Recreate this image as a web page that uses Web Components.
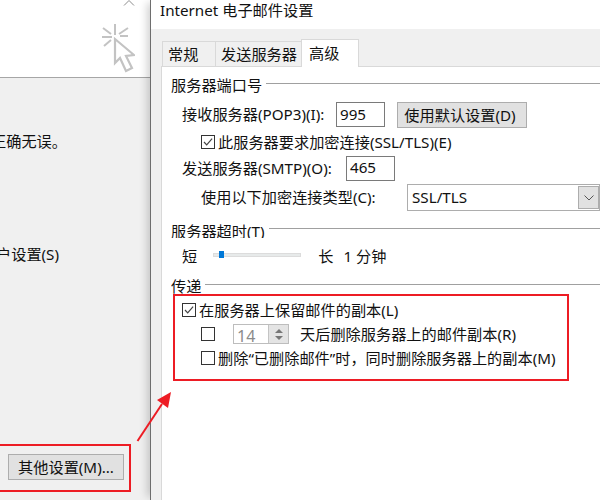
<!DOCTYPE html>
<html lang="zh-CN"><head><meta charset="utf-8">
<style>
html,body{margin:0;padding:0;width:600px;height:500px;overflow:hidden;background:#fff}
body{font-family:"Noto Sans","Noto Sans CJK SC",sans-serif;font-size:15.2px;color:#111}
</style></head><body>
<x-desktop>
  <x-back-window slot="left"></x-back-window>
  <x-mail-dialog slot="right"></x-mail-dialog>
</x-desktop>
<script>
function def(name, css, html){
  customElements.define(name, class extends HTMLElement{
    constructor(){super();const r=this.attachShadow({mode:'open'});
      r.innerHTML='<style>'+css+'</style>'+(typeof html==='function'?html(this):html);}
  });
}
def('x-button',`:host{display:inline-flex;align-items:center;justify-content:center;box-sizing:border-box;background:#e1e1e1;border:1px solid #adadad;white-space:nowrap;padding-bottom:2px}`,`<slot></slot>`);
def('x-check',`:host{display:flex;align-items:center;gap:3px;white-space:nowrap}
 .b{width:14px;height:14px;box-sizing:border-box;border:1px solid #333;background:#fff;display:block;flex:none}
 .s{padding-bottom:2px}
 svg{display:block}`,el=>`<span class="b">${el.hasAttribute('checked')?'<svg width="12" height="12" viewBox="0 0 12 12"><path d="M2 6 4.7 8.9 10.1 2.7" fill="none" stroke="#444" stroke-width="1.2"/></svg>':''}</span><span class="s"><slot></slot></span>`);
def('x-input',`:host{display:flex;align-items:center;box-sizing:border-box;background:#fff;border:1px solid #7a7a7a;padding:0 0 2px 3px;height:25px}`,`<slot></slot>`);
def('x-group',`:host{display:block}
 .l{display:flex;align-items:center;gap:4px;white-space:nowrap;overflow:hidden;height:var(--lh,20px)}
 .t{flex:none;padding-bottom:var(--lp,2px)}
 i{flex:1;height:1px;background:#a0a0a0;margin-bottom:4px}`,el=>`<div class="l"><span class="t">${el.getAttribute('label')}</span><i></i></div><slot></slot>`);
def('x-spinner',`:host{display:flex;box-sizing:border-box;width:56px;height:20px;border:1px solid #bdbdbd;background:#fff;color:#8a8a8a}
 span{flex:1;padding:1px 0 0 3px;line-height:20px;font-size:16px}
 b{width:20px;background:#e4e4e4;border-left:1px solid #c4c4c4;display:flex;flex-direction:column;align-items:center;justify-content:space-around;padding:2px 0;box-sizing:border-box}
 svg{display:block}`,`<span><slot></slot></span><b><svg width="8" height="4"><path d="M4 0 8 4H0z" fill="#777"/></svg><svg width="8" height="4"><path d="M0 0H8L4 4z" fill="#777"/></svg></b>`);
def('x-select',`:host{display:flex;box-sizing:border-box;height:27px;border:1px solid #adadad;background:#fff;align-items:center;padding:0 0 0 3px}
 span{flex:1;padding:0 0 2px 1px}
 b{width:21px;height:23px;box-sizing:border-box;background:#e1e1e1;border:1px solid #adadad;display:flex;align-items:center;justify-content:center}`,`<span><slot></slot></span><b><svg width="10" height="6"><path d="M.5 .5 5 5 9.5 .5" fill="none" stroke="#555"/></svg></b>`);
def('x-slider',`:host{display:block;position:relative;width:88px;height:16px}
 .track{position:absolute;left:0;right:0;top:5px;height:4px;background:#e7eaea;border:1px solid #dcdcdc;box-sizing:border-box}
 .thumb{position:absolute;left:6px;top:3px;width:5px;height:7px;background:#0078d7}`,`<div class="track"></div><div class="thumb"></div>`);
def('x-tab',`:host{display:flex;align-items:center;justify-content:flex-start;box-sizing:border-box;height:25px;background:#f0f0f0;border:1px solid #d9d9d9;border-bottom:0;margin-right:-1px;white-space:nowrap;padding:0 0 2px var(--tp,5px)}
 :host([active]){height:28px;background:#fff;position:relative;z-index:1;margin-bottom:-1px;padding-bottom:4px}`,`<slot></slot>`);
def('x-row',`:host{display:flex;align-items:center;white-space:nowrap}`,`<slot></slot>`);

def('x-back-window',`:host{display:flex;flex-direction:column;height:100%;background:#f0f0f0;overflow:hidden}
 .top{height:77px;box-sizing:content-box;background:#fff;border-bottom:1px solid #a6a6a6;display:flex;flex-direction:column;align-items:flex-end;padding-right:15px;flex:none}
 .chev{display:block;margin-bottom:18px}
 .cur{display:block;margin-right:0}
 .msg{white-space:nowrap;margin-top:53px;margin-left:-9px;height:20px;line-height:20px}
 .acct{white-space:nowrap;margin-top:93px;margin-left:-4px;height:20px;line-height:20px}
 .spacer{flex:1}
 x-button{width:116px;height:26px;margin:0 0 20px 8px}`,
 `<div class="top">
   <svg class="chev" width="12" height="6" viewBox="0 0 12 6"><path d="M1 5.5 6 .5 11 5.5" fill="none" stroke="#8c8c8c"/></svg>
   <svg class="cur" width="34" height="49" viewBox="0 0 34 49" fill="none" stroke="#c3c3c3" stroke-width="2"><path d="M14 0V11M2 4 10 10M1 13H11M3 22 10 16M27 4 18 10M27 12H19"/><path d="M14 15V39L19 34 25 47 31 44 25 32 33 31Z" stroke-width="2.2"/></svg>
  </div>
  <div class="msg">正确无误。</div>
  <div class="acct">户设置(S)</div>
  <div class="spacer"></div>
  <x-button>其他设置(M)...</x-button>`);

def('x-mail-dialog',`:host{display:flex;flex-direction:column;height:100%;background:#f0f0f0;border-left:1px solid #6e6e6e;box-sizing:border-box}
 .title{height:29px;background:#fff;display:flex;align-items:center;padding:0 0 11px 9px;box-sizing:border-box;white-space:nowrap;flex:none}
 .tabs{height:37px;display:flex;align-items:flex-end;padding-left:11px;flex:none;box-sizing:border-box}
 .t1{width:54px}.t2{width:87px;--tp:5px}.t3{width:58px;--tp:7px}
 .panel{flex:1;margin-left:10px;background:#fff;border-top:1px solid #d9d9d9;border-left:1px solid #d9d9d9;padding:8px 0 0 9px;min-width:0}
 .r1{height:27px;margin-top:6px;padding-left:11px}
 .r2{height:20px;margin-top:4px;padding-left:30px}
 .r3{height:26px;margin-top:3px;padding-left:11px}
 .r4{height:27px;margin-top:3px;padding-left:30px}
 .r5{height:22px;margin-top:7px;padding-left:11px}
 .g2{margin-top:11px;--lh:16px;--lp:0}
 .g3{margin-top:9px}
 .d1{margin-top:4px;padding-left:11px;height:20px}
 .d2{margin-top:4px;padding-left:30px;height:20px}
 .d3{margin-top:4px;padding-left:30px;height:20px}
 .lab{flex:none;padding-bottom:3px}
 .u{padding-bottom:3px}
 .l1{width:154px}.l2{width:164px}.l3{width:206px}
 x-input{width:49px}
 x-button{width:130px;height:26px;margin-left:12px;padding-right:4px}
 x-select{width:193px}
 x-slider{margin:0 17px 0 16px}
 x-spinner{margin:0 11px 0 15px}
 .min{margin-left:10px}`,
 `<div class="title">Internet 电子邮件设置</div>
  <div class="tabs"><x-tab class="t1">常规</x-tab><x-tab class="t2">发送服务器</x-tab><x-tab class="t3" active>高级</x-tab></div>
  <div class="panel">
   <x-group label="服务器端口号">
    <x-row class="r1"><span class="lab l1">接收服务器(POP3)(I):</span><x-input>995</x-input><x-button>使用默认设置(D)</x-button></x-row>
    <x-row class="r2"><x-check checked>此服务器要求加密连接(SSL/TLS)(E)</x-check></x-row>
    <x-row class="r3"><span class="lab l2">发送服务器(SMTP)(O):</span><x-input>465</x-input></x-row>
    <x-row class="r4"><span class="lab l3">使用以下加密连接类型(C):</span><x-select>SSL/TLS</x-select></x-row>
   </x-group>
   <x-group class="g2" label="服务器超时(T)">
    <x-row class="r5"><span class="u">短</span><x-slider></x-slider><span class="u">长</span><span class="min u">1 分钟</span></x-row>
   </x-group>
   <x-group class="g3" label="传递">
    <x-row class="d1"><x-check checked>在服务器上保留邮件的副本(L)</x-check></x-row>
    <x-row class="d2"><x-check></x-check><x-spinner>14</x-spinner><span class="u">天后删除服务器上的邮件副本(R)</span></x-row>
    <x-row class="d3"><x-check>删除“已删除邮件”时，同时删除服务器上的副本(M)</x-check></x-row>
   </x-group>
  </div>`);

def('x-annotations',`:host{position:absolute;inset:0;pointer-events:none;display:block}
 div{position:absolute;box-sizing:border-box;border:2.5px solid #ed1c24}
 .a{left:173px;top:294px;width:396px;height:87px}
 .b{left:-3px;top:444px;width:134px;height:48px}
 svg{position:absolute;left:0;top:0}`,
 `<div class="a"></div><div class="b"></div>
  <svg width="600" height="500"><path d="M137.5 441 162 404" stroke="#ed1c24" stroke-width="2" fill="none"/><path d="M171 392 157 400 168 408Z" fill="#ed1c24"/></svg>`);

def('x-desktop',`:host{display:flex;position:relative;width:600px;height:500px;overflow:hidden}
 .l{width:150px;flex:none;height:100%}.r{flex:1;height:100%;min-width:0;box-shadow:-6px 0 8px -3px rgba(0,0,0,.18)}`,
 `<div class="l"><slot name="left"></slot></div><div class="r"><slot name="right"></slot></div><x-annotations></x-annotations>`);
</script>
</body></html>
